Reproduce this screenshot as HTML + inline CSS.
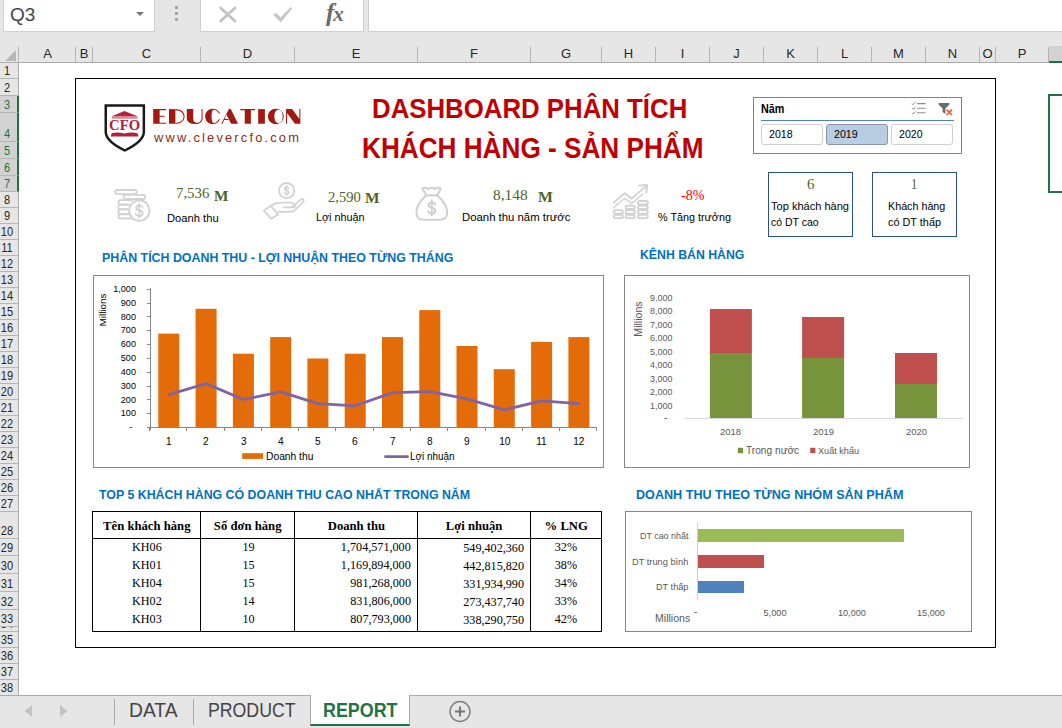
<!DOCTYPE html>
<html>
<head>
<meta charset="utf-8">
<title>Dashboard</title>
<style>
*{box-sizing:border-box;margin:0;padding:0}
html,body{width:1062px;height:728px;overflow:hidden;background:#fff}
body{font-family:"Liberation Sans",sans-serif;position:relative;color:#000}
.abs{position:absolute}
.t{position:absolute;white-space:nowrap;line-height:1;transform-origin:0 50%}
.serif{font-family:"Liberation Serif",serif}
#fbar{left:0;top:0;width:1062px;height:44px;background:#e6e6e6}
#namebox{left:3px;top:-1px;width:152px;height:33px;background:#fff;border:1px solid #d0d0d0}
#fxbox{left:200px;top:-1px;width:164px;height:33px;background:#fff;border:1px solid #d0d0d0}
#finput{left:368px;top:-1px;width:700px;height:33px;background:#fff;border:1px solid #d0d0d0}
#colhdr{left:0;top:32px;width:1062px;height:31px;background:#e6e6e6;border-bottom:1px solid #ababab}
.ch{position:absolute;top:45px;height:17px;font-size:13px;line-height:17px;text-align:center;color:#262626;padding-left:1px}
.cs{position:absolute;top:47px;width:1px;height:16px;background:#b5b5b5}
#rowhdr{left:0;top:63px;width:19px;height:633px;background:#e6e6e6;border-right:1px solid #ababab}
.rh{position:absolute;left:0;width:18px;font-size:13.5px;color:#262626;border-bottom:1px solid #b5b5b5;overflow:hidden}
.rh span{position:absolute;left:-8px;width:30px;bottom:0px;line-height:15px;text-align:center;transform:scaleX(.82)}
.rh.sel{background:#d2d2d2;color:#217346;width:19px;border-right:2px solid #217346}
#tabbar{left:0;top:695px;width:1062px;height:33px;background:#e6e6e6;border-top:1px solid #ababab}
.box{position:absolute;background:#fff}
</style>
</head>
<body>
<div class="abs" id="fbar"></div>
<div class="abs" id="namebox"></div>
<div class="abs" id="fxbox"></div>
<div class="abs" id="finput"></div>
<div class="t" style="left:10px;top:5px;font-size:19px;color:#444">Q3</div>
<svg class="abs" style="left:134px;top:10px" width="12" height="8"><path d="M2 2 L10 2 L6 6 Z" fill="#777"/></svg>
<div class="abs" style="left:175px;top:6px;width:3px;height:3px;background:#a6a6a6;box-shadow:0 6px 0 #a6a6a6,0 12px 0 #a6a6a6"></div>
<svg class="abs" style="left:216px;top:4px" width="24" height="22"><path d="M4.6 4 L19 17 M19 4 L4.6 17" stroke="#c2c2c2" stroke-width="2.8" stroke-linecap="round" fill="none"/></svg>
<svg class="abs" style="left:270px;top:4px" width="26" height="22"><path d="M3.4 10.4 L6.2 9 L10.6 13.6 L20.8 3 L22.2 4.4 L10.6 18.6 Z" fill="#c6c6c6"/></svg>
<div class="t serif" style="left:326px;top:0px;font-size:25px;font-style:italic;font-weight:bold;color:#6a6a6a;letter-spacing:-1px">f<span style="font-size:21px">x</span></div>
<div class="abs" id="colhdr"></div>
<div class="ch" style="left:19px;width:56px">A</div><div class="cs" style="left:75px"></div>
<div class="ch" style="left:75px;width:17px">B</div><div class="cs" style="left:92px"></div>
<div class="ch" style="left:92px;width:108px">C</div><div class="cs" style="left:200px"></div>
<div class="ch" style="left:200px;width:94px">D</div><div class="cs" style="left:294px"></div>
<div class="ch" style="left:294px;width:123px">E</div><div class="cs" style="left:417px"></div>
<div class="ch" style="left:417px;width:113px">F</div><div class="cs" style="left:530px"></div>
<div class="ch" style="left:530px;width:71px">G</div><div class="cs" style="left:601px"></div>
<div class="ch" style="left:601px;width:54px">H</div><div class="cs" style="left:655px"></div>
<div class="ch" style="left:655px;width:54px">I</div><div class="cs" style="left:709px"></div>
<div class="ch" style="left:709px;width:54px">J</div><div class="cs" style="left:763px"></div>
<div class="ch" style="left:763px;width:54px">K</div><div class="cs" style="left:817px"></div>
<div class="ch" style="left:817px;width:54px">L</div><div class="cs" style="left:871px"></div>
<div class="ch" style="left:871px;width:54px">M</div><div class="cs" style="left:925px"></div>
<div class="ch" style="left:925px;width:54px">N</div><div class="cs" style="left:979px"></div>
<div class="ch" style="left:979px;width:16px">O</div><div class="cs" style="left:995px"></div>
<div class="ch" style="left:995px;width:53px">P</div><div class="cs" style="left:1048px"></div>
<div class="abs" style="left:1049px;top:46px;width:13px;height:17px;background:#d2d2d2;border-bottom:2px solid #217346"></div>
<div class="cs" style="left:18px"></div>
<svg class="abs" style="left:4px;top:50px" width="13" height="12"><path d="M12 0 L12 11 L1 11 Z" fill="#b7b7b7"/></svg>
<div class="abs" id="rowhdr"></div>
<div class="rh" style="top:63px;height:16px"><span>1</span></div>
<div class="rh" style="top:79px;height:17px"><span>2</span></div>
<div class="rh sel" style="top:96px;height:17px"><span>3</span></div>
<div class="rh sel" style="top:113px;height:29px"><span>4</span></div>
<div class="rh sel" style="top:142px;height:17px"><span>5</span></div>
<div class="rh sel" style="top:159px;height:17px"><span>6</span></div>
<div class="rh sel" style="top:176px;height:16px"><span>7</span></div>
<div class="rh" style="top:192px;height:16px"><span>8</span></div>
<div class="rh" style="top:208px;height:16px"><span>9</span></div>
<div class="rh" style="top:224px;height:16px"><span>10</span></div>
<div class="rh" style="top:240px;height:16px"><span>11</span></div>
<div class="rh" style="top:256px;height:16px"><span>12</span></div>
<div class="rh" style="top:272px;height:16px"><span>13</span></div>
<div class="rh" style="top:288px;height:16px"><span>14</span></div>
<div class="rh" style="top:304px;height:16px"><span>15</span></div>
<div class="rh" style="top:320px;height:16px"><span>16</span></div>
<div class="rh" style="top:336px;height:16px"><span>17</span></div>
<div class="rh" style="top:352px;height:16px"><span>18</span></div>
<div class="rh" style="top:368px;height:16px"><span>19</span></div>
<div class="rh" style="top:384px;height:16px"><span>20</span></div>
<div class="rh" style="top:400px;height:16px"><span>21</span></div>
<div class="rh" style="top:416px;height:16px"><span>22</span></div>
<div class="rh" style="top:432px;height:16px"><span>23</span></div>
<div class="rh" style="top:448px;height:16px"><span>24</span></div>
<div class="rh" style="top:464px;height:16px"><span>25</span></div>
<div class="rh" style="top:480px;height:16px"><span>26</span></div>
<div class="rh" style="top:496px;height:16px"><span>27</span></div>
<div class="rh" style="top:512px;height:27px"><span>28</span></div>
<div class="rh" style="top:539px;height:17px"><span>29</span></div>
<div class="rh" style="top:556px;height:18px"><span>30</span></div>
<div class="rh" style="top:574px;height:18px"><span>31</span></div>
<div class="rh" style="top:592px;height:18px"><span>32</span></div>
<div class="rh" style="top:610px;height:17px"><span>33</span></div>
<div class="rh" style="top:627px;height:5px"><span>34</span></div>
<div class="rh" style="top:632px;height:16px"><span>35</span></div>
<div class="rh" style="top:648px;height:16px"><span>36</span></div>
<div class="rh" style="top:664px;height:16px"><span>37</span></div>
<div class="rh" style="top:680px;height:16px"><span>38</span></div>
<div class="abs" style="left:1048px;top:94px;width:30px;height:99px;border:2px solid #217346;background:#fff"></div>
<div class="abs" style="left:75px;top:78px;width:921px;height:570px;border:1px solid #000;background:#fff"></div>
<svg class="abs" style="left:100px;top:100px" width="50" height="56" viewBox="0 0 50 56">
<path d="M5.75 5.5 H43.85 V32 C43.85 40 34 46 24.8 50.5 C15.6 46 5.75 40 5.75 32 Z" fill="#fff" stroke="#1a1a1a" stroke-width="2.5" stroke-linejoin="miter"/>
<path d="M11.2 16.4 L24.4 10.9 L38 16.4 Z" fill="#b5203a"/>
<rect x="11.8" y="16.9" width="25.6" height="1.8" fill="#b5203a" opacity=".55"/>
<path d="M10.5 36.5 L12 33 Q18 31.6 24.6 33.6 Q31 31.6 37.2 33 L38.7 36.5 Z" fill="#b5203a"/>
</svg>
<div class="t serif" style="top:117.84px;font-size:15px;color:#b5203a;font-weight:bold;left:108.90px;transform:scaleX(0.9819);">CFO</div>
<svg class="abs" style="left:150px;top:104px" width="160" height="26" viewBox="0 0 1096 178" fill="#a3190f">
<path d="M22 35 H110 V42 H66 V80 H100 V87 H66 V128 H110 V135 H22 Z"/>
<path d="M130 35 H174 V135 H130 Z"/><path d="M174 35 C216 35 237 60 237 85 C237 110 216 135 174 135 V128 C210 128 230 108 230 85 C230 62 210 42 174 42 Z"/>
<path d="M252 35 H296 V100 C296 120 306 129 318 129 C339 129 353 115 353 95 V35 H360 V95 C360 122 340 137 312 137 C275 137 252 122 252 95 Z"/>
<path d="M479 64 C471 46 453 33 432 33 C400 33 378 55 378 85 C378 115 400 137 432 137 C453 137 471 124 479 106 L473 103 C466 118 452 130 438 130 C426 130 422 110 422 85 C422 60 426 40 438 40 C452 40 466 52 473 67 Z"/>
<path d="M541 35 H553 L603 135 H555 L524 72 L511 102 H536 L539 109 H508 L496 135 H488 Z"/>
<path d="M618 35 H720 V42 H691 V135 H649 V42 H618 Z"/>
<rect x="741" y="35" width="46" height="100"/>
<path fill-rule="evenodd" d="M862 33 C892 33 916 56 916 85 C916 114 892 137 862 137 C832 137 808 114 808 85 C808 56 832 33 862 33 Z M880 40 C862 40 852 60 852 85 C852 110 862 130 880 130 C897 130 909 110 909 85 C909 60 897 40 880 40 Z"/>
<path d="M932 35 H974 L1023 102 V35 H1030 V135 H992 L939 62 V135 H932 Z"/>
</svg>
<div class="t" style="top:130.60px;font-size:13px;color:#8e2a22;letter-spacing:2.2px;left:153.60px;transform:scaleX(0.9894);">www.clevercfo.com</div>
<div class="t" style="top:95.00px;font-size:28px;color:#c00000;font-weight:bold;left:372.00px;transform:scaleX(0.9213);">DASHBOARD PHÂN TÍCH</div>
<div class="t" style="top:133.99px;font-size:28.6px;color:#c00000;font-weight:bold;left:362.20px;transform:scaleX(0.9148);">KHÁCH HÀNG - SẢN PHẨM</div>
<svg class="abs" style="left:0;top:0" width="1062" height="240" viewBox="0 0 1062 240" fill="none" stroke="#d2d2d2" stroke-width="1.8" stroke-linecap="round" stroke-linejoin="round">
<!-- coin stack -->
<rect x="115.2" y="190" width="21.4" height="4.2" rx="2.1"/>
<rect x="123.6" y="194.8" width="21.6" height="4.2" rx="2.1"/>
<path d="M132 200.2 H120.6 a2.1 2.1 0 0 0 0 4.2 H128.6"/>
<path d="M128.4 204.9 H120.4 a2.1 2.1 0 0 0 0 4.2 H127.6"/>
<path d="M127.6 209.6 H120.4 a2.1 2.1 0 0 0 0 4.2 H128.4"/>
<path d="M128.6 214.3 H120.6 a2.1 2.1 0 0 0 0 4.2 H132.6"/>
<circle cx="139.3" cy="210.6" r="10.2"/>
<path d="M142.6 207.4 q-.9 -2 -3.3 -2 q-3.1 0 -3.1 2.5 q0 2 3.1 2.6 q3.4 .6 3.4 2.9 q0 2.6 -3.4 2.6 q-2.8 0 -3.6 -2.2 M139.3 203.6 V217.8" stroke-width="1.7"/>
<!-- hand + coin -->
<circle cx="286.6" cy="190.6" r="7.6"/>
<path d="M288.8 188.4 q-.6 -1.3 -2.2 -1.3 q-2.1 0 -2.1 1.7 q0 1.3 2.1 1.7 q2.3 .4 2.3 1.9 q0 1.7 -2.3 1.7 q-1.8 0 -2.4 -1.4 M286.6 185.8 V195.4" stroke-width="1.4"/>
<path d="M263.9 210.6 L270.9 205.8 L278 214.4 L271.3 218.8 Z"/>
<path d="M270.9 205.8 Q275 203 279.5 202.6 H290 Q295 203.2 295 205.4 Q295 207.4 291.6 207.4 H284"/>
<path d="M292 207.4 L300.8 199.4 Q303 198 303.6 200 Q304 201.4 302.6 202.6 L294.2 210.6 Q293 211.6 291 211.6 L278.5 211.9"/>
<!-- money bag -->
<g transform="translate(412.8,184.8)" stroke-width="2.1">
<path d="M13.5 10.6 L9.6 3.6 Q13 2.4 16 4.2 Q19 2 22 4.2 Q25 2.4 28 3.6 L24.4 10.6 Z"/>
<path d="M13.5 10.6 Q3.6 19 3.6 28 Q3.6 35 11 35 H27 Q34.4 35 34.4 28 Q34.4 19 24.4 10.6"/>
<path d="M22.4 19.6 q-1 -1.8 -3.4 -1.8 q-3.2 0 -3.2 2.6 q0 2 3.2 2.6 q3.4 .6 3.4 3 q0 2.6 -3.4 2.6 q-2.8 0 -3.6 -2.2 M19 15.6 V30.8" stroke-width="2"/>
</g>
<!-- growth chart -->
<g transform="translate(610,182.2) scale(1.05,1)">
<path d="M3.5 20.5 L14 11 L20.6 16.4 L33.6 4.6 M27.6 3.4 L35.4 2.8 L34.6 10.6"/>
<path d="M3.5 25.4 L14 16 L20.6 21.4 L31 12" stroke-width="1.4"/>
<rect x="3.6" y="28" width="8.6" height="3.4" rx="1.7"/><rect x="3.6" y="32.6" width="8.6" height="3.4" rx="1.7"/>
<rect x="15" y="23.4" width="8.6" height="3.4" rx="1.7"/><rect x="15" y="28" width="8.6" height="3.4" rx="1.7"/><rect x="15" y="32.6" width="8.6" height="3.4" rx="1.7"/>
<rect x="26.6" y="18.8" width="9.4" height="3.4" rx="1.7"/><rect x="26.6" y="23.4" width="9.4" height="3.4" rx="1.7"/><rect x="26.6" y="28" width="9.4" height="3.4" rx="1.7"/><rect x="26.6" y="32.6" width="9.4" height="3.4" rx="1.7"/>
</g>
</svg>
<div class="t serif" style="top:187.03px;font-size:13.7px;color:#4f6228;left:176.30px;transform:scaleX(1.0813);">7,536</div>
<div class="t serif" style="top:188.72px;font-size:14.3px;color:#4f6228;font-weight:bold;left:214.40px;transform:scaleX(1.0667);">M</div>
<div class="t" style="top:212.59px;font-size:11px;color:#000;left:167.20px;transform:scaleX(1.0164);">Doanh thu</div>
<div class="t serif" style="top:190.63px;font-size:13.7px;color:#4f6228;left:328.20px;transform:scaleX(1.0650);">2,590</div>
<div class="t serif" style="top:190.62px;font-size:14.3px;color:#4f6228;font-weight:bold;left:365.30px;transform:scaleX(1.0741);">M</div>
<div class="t" style="top:211.59px;font-size:11px;color:#000;left:316.40px;transform:scaleX(0.9834);">Lợi nhuận</div>
<div class="t serif" style="top:189.13px;font-size:13.7px;color:#4f6228;left:493.30px;transform:scaleX(1.1235);">8,148</div>
<div class="t serif" style="top:190.12px;font-size:14.3px;color:#4f6228;font-weight:bold;left:538.40px;transform:scaleX(1.1037);">M</div>
<div class="t" style="top:212.49px;font-size:11px;color:#000;left:462.00px;transform:scaleX(1.0316);">Doanh thu năm trước</div>
<div class="t serif" style="top:188.73px;font-size:13.7px;color:#ff0000;left:680.60px;transform:scaleX(1.0301);">-8%</div>
<div class="t" style="top:211.69px;font-size:11px;color:#000;left:657.70px;transform:scaleX(0.9810);">% Tăng trưởng</div>
<div class="abs" style="left:753px;top:97px;width:209px;height:57px;border:1px solid #5b8ac6;background:#fff"></div>
<div class="t" style="top:103.44px;font-size:12px;color:#000;font-weight:bold;left:761.20px;transform:scaleX(0.8995);">Năm</div>
<div class="abs" style="left:761px;top:119.5px;width:193px;height:1px;background:#4f81bd"></div>
<svg class="abs" style="left:911px;top:101px" width="16" height="15" viewBox="0 0 16 15" fill="none" stroke="#8c8c8c" stroke-width="1.1">
<path d="M6 2.6 H14.6 M6 7.2 H14.6 M6 11.8 H14.6"/>
<path d="M1 2.6 L2.2 3.8 L4.4 1.2 M1 7.2 L2.2 8.4 L4.4 5.8 M1 11.8 L2.2 13 L4.4 10.4" stroke-width="1"/>
</svg>
<svg class="abs" style="left:937px;top:101px" width="17" height="16" viewBox="0 0 17 16">
<path d="M1.6 2 H12.4 V3.6 L8.4 7.6 V13 L5.6 11 V7.6 L1.6 3.6 Z" fill="#6a6a6a"/>
<path d="M9.6 8.6 L15 14 M15 8.6 L9.6 14" stroke="#e4573f" stroke-width="1.6" fill="none"/>
</svg>
<div class="abs" style="left:761px;top:124px;width:62px;height:21px;border:1px solid #cfcfcf;border-radius:3px;background:#fff"></div>
<div class="t" style="top:129.21px;font-size:11.8px;color:#000;left:769.40px;transform:scaleX(0.8990);">2018</div>
<div class="abs" style="left:826px;top:124px;width:62px;height:21px;border:1px solid #8a96a8;border-radius:3px;background:#b8cce4"></div>
<div class="t" style="top:129.21px;font-size:11.8px;color:#000;left:834.40px;transform:scaleX(0.8990);">2019</div>
<div class="abs" style="left:891px;top:124px;width:62px;height:21px;border:1px solid #cfcfcf;border-radius:3px;background:#fff"></div>
<div class="t" style="top:129.21px;font-size:11.8px;color:#000;left:899.40px;transform:scaleX(0.8990);">2020</div>
<div class="abs" style="left:768px;top:172px;width:85px;height:65px;border:1px solid #2a518c;background:#fff"></div>
<div class="abs" style="left:872px;top:172px;width:85px;height:65px;border:1px solid #2a518c;background:#fff"></div>
<div class="t serif" style="top:176.74px;font-size:15px;color:#4f6228;left:807.00px;transform:scaleX(0.9867);">6</div>
<div class="t" style="top:201.29px;font-size:11px;color:#000;left:771.20px;transform:scaleX(1.0042);">Top khách hàng</div>
<div class="t" style="top:216.69px;font-size:11px;color:#000;left:771.20px;transform:scaleX(0.9532);">có DT cao</div>
<div class="t serif" style="top:176.74px;font-size:15px;color:#4f6228;left:911.40px;transform:scaleX(0.8267);">1</div>
<div class="t" style="top:201.29px;font-size:11px;color:#000;left:887.70px;transform:scaleX(0.9758);">Khách hàng</div>
<div class="t" style="top:216.69px;font-size:11px;color:#000;left:887.70px;transform:scaleX(0.9886);">có DT thấp</div>
<div class="t" style="top:251.06px;font-size:13.4px;color:#0070c0;font-weight:bold;left:102.40px;transform:scaleX(0.9255);">PHÂN TÍCH DOANH THU - LỢI NHUẬN THEO TỪNG THÁNG</div>
<div class="t" style="top:248.26px;font-size:13.4px;color:#0070c0;font-weight:bold;left:639.70px;transform:scaleX(0.9163);">KÊNH BÁN HÀNG</div>
<div class="t" style="top:488.26px;font-size:13.4px;color:#0070c0;font-weight:bold;left:99.30px;transform:scaleX(0.9232);">TOP 5 KHÁCH HÀNG CÓ DOANH THU CAO NHẤT TRONG NĂM</div>
<div class="t" style="top:488.26px;font-size:13.4px;color:#0070c0;font-weight:bold;left:636.40px;transform:scaleX(0.9411);">DOANH THU THEO TỪNG NHÓM SẢN PHẨM</div>
<div class="abs" style="left:93px;top:275px;width:511px;height:193px;border:1px solid #868686;background:#fff"></div>
<svg class="abs" style="left:0;top:0" width="1062" height="728" viewBox="0 0 1062 728">
<rect x="158.3" y="333.6" width="21" height="93.4" fill="#e36c09"/>
<rect x="195.6" y="308.8" width="21" height="118.2" fill="#e36c09"/>
<rect x="232.9" y="353.7" width="21" height="73.3" fill="#e36c09"/>
<rect x="270.2" y="337.1" width="21" height="89.9" fill="#e36c09"/>
<rect x="307.4" y="358.5" width="21" height="68.5" fill="#e36c09"/>
<rect x="344.7" y="353.7" width="21" height="73.3" fill="#e36c09"/>
<rect x="382.0" y="337.1" width="21" height="89.9" fill="#e36c09"/>
<rect x="419.3" y="310.1" width="21" height="116.9" fill="#e36c09"/>
<rect x="456.5" y="346.0" width="21" height="81.0" fill="#e36c09"/>
<rect x="493.8" y="369.2" width="21" height="57.8" fill="#e36c09"/>
<rect x="531.1" y="341.9" width="21" height="85.1" fill="#e36c09"/>
<rect x="568.4" y="337.1" width="21" height="89.9" fill="#e36c09"/>
<path d="M150.5 288 V430.0" stroke="#868686" stroke-width="1" fill="none"/>
<path d="M147 427.5 H597" stroke="#868686" stroke-width="1" fill="none"/>
<path d="M147 427.5 H150" stroke="#868686" stroke-width="1"/>
<path d="M147 413.5 H150" stroke="#868686" stroke-width="1"/>
<path d="M147 399.5 H150" stroke="#868686" stroke-width="1"/>
<path d="M147 386.5 H150" stroke="#868686" stroke-width="1"/>
<path d="M147 372.5 H150" stroke="#868686" stroke-width="1"/>
<path d="M147 358.5 H150" stroke="#868686" stroke-width="1"/>
<path d="M147 344.5 H150" stroke="#868686" stroke-width="1"/>
<path d="M147 330.5 H150" stroke="#868686" stroke-width="1"/>
<path d="M147 316.5 H150" stroke="#868686" stroke-width="1"/>
<path d="M147 303.5 H150" stroke="#868686" stroke-width="1"/>
<path d="M147 289.5 H150" stroke="#868686" stroke-width="1"/>
<path d="M149.5 427.0 V431.0" stroke="#868686" stroke-width="1"/>
<path d="M186.5 427.0 V431.0" stroke="#868686" stroke-width="1"/>
<path d="M224.5 427.0 V431.0" stroke="#868686" stroke-width="1"/>
<path d="M261.5 427.0 V431.0" stroke="#868686" stroke-width="1"/>
<path d="M298.5 427.0 V431.0" stroke="#868686" stroke-width="1"/>
<path d="M335.5 427.0 V431.0" stroke="#868686" stroke-width="1"/>
<path d="M373.5 427.0 V431.0" stroke="#868686" stroke-width="1"/>
<path d="M410.5 427.0 V431.0" stroke="#868686" stroke-width="1"/>
<path d="M447.5 427.0 V431.0" stroke="#868686" stroke-width="1"/>
<path d="M485.5 427.0 V431.0" stroke="#868686" stroke-width="1"/>
<path d="M522.5 427.0 V431.0" stroke="#868686" stroke-width="1"/>
<path d="M559.5 427.0 V431.0" stroke="#868686" stroke-width="1"/>
<path d="M596.5 427.0 V431.0" stroke="#868686" stroke-width="1"/>
<polyline points="168.8,394.7 206.1,383.6 243.4,399.5 280.7,391.9 317.9,403.7 355.2,405.8 392.5,392.6 429.8,391.7 467.0,398.9 504.3,409.9 541.6,400.9 578.9,403.7" fill="none" stroke="#8064a2" stroke-width="2.8" stroke-linejoin="round" stroke-linecap="round"/>
<rect x="242.2" y="453.2" width="20.8" height="5.7" fill="#e36c09"/>
<path d="M385.4 456.6 H407.6" stroke="#8064a2" stroke-width="2.8" stroke-linecap="round"/>
</svg>
<div class="t" style="top:422.27px;font-size:9.6px;color:#000;left:129.40px;transform-origin:100% 50%;transform:scaleX(0.95);">-</div>
<div class="t" style="top:408.44px;font-size:9.6px;color:#000;left:120.38px;transform-origin:100% 50%;transform:scaleX(0.95);">100</div>
<div class="t" style="top:394.61px;font-size:9.6px;color:#000;left:120.38px;transform-origin:100% 50%;transform:scaleX(0.95);">200</div>
<div class="t" style="top:380.78px;font-size:9.6px;color:#000;left:120.38px;transform-origin:100% 50%;transform:scaleX(0.95);">300</div>
<div class="t" style="top:366.95px;font-size:9.6px;color:#000;left:120.38px;transform-origin:100% 50%;transform:scaleX(0.95);">400</div>
<div class="t" style="top:353.12px;font-size:9.6px;color:#000;left:120.38px;transform-origin:100% 50%;transform:scaleX(0.95);">500</div>
<div class="t" style="top:339.29px;font-size:9.6px;color:#000;left:120.38px;transform-origin:100% 50%;transform:scaleX(0.95);">600</div>
<div class="t" style="top:325.46px;font-size:9.6px;color:#000;left:120.38px;transform-origin:100% 50%;transform:scaleX(0.95);">700</div>
<div class="t" style="top:311.63px;font-size:9.6px;color:#000;left:120.38px;transform-origin:100% 50%;transform:scaleX(0.95);">800</div>
<div class="t" style="top:297.80px;font-size:9.6px;color:#000;left:120.38px;transform-origin:100% 50%;transform:scaleX(0.95);">900</div>
<div class="t" style="top:283.97px;font-size:9.6px;color:#000;left:112.38px;transform-origin:100% 50%;transform:scaleX(0.95);">1,000</div>
<div class="t" style="top:437.30px;font-size:10.4px;color:#000;left:165.95px;transform-origin:50% 50%;transform:scaleX(0.97);">1</div>
<div class="t" style="top:437.30px;font-size:10.4px;color:#000;left:203.22px;transform-origin:50% 50%;transform:scaleX(0.97);">2</div>
<div class="t" style="top:437.30px;font-size:10.4px;color:#000;left:240.50px;transform-origin:50% 50%;transform:scaleX(0.97);">3</div>
<div class="t" style="top:437.30px;font-size:10.4px;color:#000;left:277.77px;transform-origin:50% 50%;transform:scaleX(0.97);">4</div>
<div class="t" style="top:437.30px;font-size:10.4px;color:#000;left:315.05px;transform-origin:50% 50%;transform:scaleX(0.97);">5</div>
<div class="t" style="top:437.30px;font-size:10.4px;color:#000;left:352.32px;transform-origin:50% 50%;transform:scaleX(0.97);">6</div>
<div class="t" style="top:437.30px;font-size:10.4px;color:#000;left:389.60px;transform-origin:50% 50%;transform:scaleX(0.97);">7</div>
<div class="t" style="top:437.30px;font-size:10.4px;color:#000;left:426.87px;transform-origin:50% 50%;transform:scaleX(0.97);">8</div>
<div class="t" style="top:437.30px;font-size:10.4px;color:#000;left:464.15px;transform-origin:50% 50%;transform:scaleX(0.97);">9</div>
<div class="t" style="top:437.30px;font-size:10.4px;color:#000;left:498.53px;transform-origin:50% 50%;transform:scaleX(0.97);">10</div>
<div class="t" style="top:437.30px;font-size:10.4px;color:#000;left:536.19px;transform-origin:50% 50%;transform:scaleX(0.97);">11</div>
<div class="t" style="top:437.30px;font-size:10.4px;color:#000;left:573.08px;transform-origin:50% 50%;transform:scaleX(0.97);">12</div>
<div class="t" style="top:451.84px;font-size:10px;color:#000;left:265.60px;transform:scaleX(1.0269);">Doanh thu</div>
<div class="t" style="top:451.84px;font-size:10px;color:#000;left:409.80px;transform:scaleX(0.9880);">Lợi nhuận</div>
<div class="t" style="left:103.4px;top:309.6px;font-size:9.8px;transform-origin:50% 50%;transform:translate(-50%,-50%) rotate(-90deg)">Millions</div>
<div class="abs" style="left:624px;top:275px;width:346px;height:193px;border:1px solid #868686;background:#fff"></div>
<svg class="abs" style="left:0;top:0" width="1062" height="728" viewBox="0 0 1062 728">
<rect x="709.9" y="353" width="42" height="65" fill="#77933c"/>
<rect x="709.9" y="309" width="42" height="44" fill="#c0504d"/>
<rect x="802.1" y="358" width="42" height="60" fill="#77933c"/>
<rect x="802.1" y="317" width="42" height="41" fill="#c0504d"/>
<rect x="895" y="384" width="42" height="34" fill="#77933c"/>
<rect x="895" y="353" width="42" height="31" fill="#c0504d"/>
<path d="M684.5 418.5 H962.6" stroke="#d9d9d9" stroke-width="1"/>
<rect x="737.8" y="447.8" width="5.2" height="5.4" fill="#77933c"/>
<rect x="810.2" y="447.8" width="5.2" height="5.4" fill="#c0504d"/>
</svg>
<div class="t" style="top:413.04px;font-size:10px;color:#595959;left:664.00px;">-</div>
<div class="t" style="top:401.78px;font-size:9px;color:#595959;left:650.40px;transform:scaleX(0.9942);">1,000</div>
<div class="t" style="top:388.28px;font-size:9px;color:#595959;left:650.40px;transform:scaleX(0.9942);">2,000</div>
<div class="t" style="top:374.78px;font-size:9px;color:#595959;left:650.40px;transform:scaleX(0.9942);">3,000</div>
<div class="t" style="top:361.28px;font-size:9px;color:#595959;left:650.40px;transform:scaleX(0.9942);">4,000</div>
<div class="t" style="top:347.78px;font-size:9px;color:#595959;left:650.40px;transform:scaleX(0.9942);">5,000</div>
<div class="t" style="top:334.28px;font-size:9px;color:#595959;left:650.40px;transform:scaleX(0.9942);">6,000</div>
<div class="t" style="top:320.78px;font-size:9px;color:#595959;left:650.40px;transform:scaleX(0.9942);">7,000</div>
<div class="t" style="top:307.28px;font-size:9px;color:#595959;left:650.40px;transform:scaleX(0.9942);">8,000</div>
<div class="t" style="top:293.78px;font-size:9px;color:#595959;left:650.40px;transform:scaleX(0.9942);">9,000</div>
<div class="t" style="top:427.71px;font-size:9.2px;color:#595959;left:720.40px;transform:scaleX(1.0267);">2018</div>
<div class="t" style="top:427.71px;font-size:9.2px;color:#595959;left:812.60px;transform:scaleX(1.0267);">2019</div>
<div class="t" style="top:427.71px;font-size:9.2px;color:#595959;left:905.50px;transform:scaleX(1.0267);">2020</div>
<div class="t" style="top:445.54px;font-size:10px;color:#595959;left:745.90px;transform:scaleX(1.0164);">Trong nước</div>
<div class="t" style="top:445.70px;font-size:9.8px;color:#595959;left:817.50px;transform:scaleX(0.9314);">Xuất khẩu</div>
<div class="t" style="left:638px;top:318.5px;font-size:10.6px;color:#595959;transform-origin:50% 50%;transform:translate(-50%,-50%) rotate(-90deg)">Millions</div>
<div class="abs" style="left:92px;top:511px;width:510px;height:121px;border:1px solid #000;background:#fff"></div>
<div class="abs" style="left:92px;top:538px;width:510px;height:1px;background:#000"></div>
<div class="abs" style="left:200px;top:511px;width:1px;height:121px;background:#000"></div>
<div class="abs" style="left:294px;top:511px;width:1px;height:121px;background:#000"></div>
<div class="abs" style="left:417px;top:511px;width:1px;height:121px;background:#000"></div>
<div class="abs" style="left:530px;top:511px;width:1px;height:121px;background:#000"></div>
<div class="t serif" style="top:519.11px;font-size:13px;color:#000;font-weight:bold;left:101.70px;transform-origin:50% 50%;transform:scaleX(0.975);">Tên khách hàng</div>
<div class="t serif" style="top:519.11px;font-size:13px;color:#000;font-weight:bold;left:212.82px;transform-origin:50% 50%;transform:scaleX(0.975);">Số đơn hàng</div>
<div class="t serif" style="top:519.11px;font-size:13px;color:#000;font-weight:bold;left:326.55px;transform-origin:50% 50%;transform:scaleX(0.975);">Doanh thu</div>
<div class="t serif" style="top:519.11px;font-size:13px;color:#000;font-weight:bold;left:444.92px;transform-origin:50% 50%;transform:scaleX(0.975);">Lợi nhuận</div>
<div class="t serif" style="top:519.11px;font-size:13px;color:#000;font-weight:bold;left:543.79px;transform-origin:50% 50%;transform:scaleX(0.975);">% LNG</div>
<div class="t serif" style="top:539.71px;font-size:13px;color:#000;left:130.61px;transform-origin:50% 50%;transform:scaleX(0.935);">KH06</div>
<div class="t serif" style="top:539.71px;font-size:13px;color:#000;left:242.25px;transform-origin:50% 50%;transform:scaleX(0.935);">19</div>
<div class="t serif" style="top:539.71px;font-size:13px;color:#000;left:336.25px;transform-origin:100% 50%;transform:scaleX(0.935);">1,704,571,000</div>
<div class="t serif" style="top:541.21px;font-size:13px;color:#000;left:458.80px;transform-origin:100% 50%;transform:scaleX(0.935);">549,402,360</div>
<div class="t serif" style="top:539.71px;font-size:13px;color:#000;left:554.08px;transform-origin:50% 50%;transform:scaleX(0.935);">32%</div>
<div class="t serif" style="top:557.76px;font-size:13px;color:#000;left:130.61px;transform-origin:50% 50%;transform:scaleX(0.935);">KH01</div>
<div class="t serif" style="top:557.76px;font-size:13px;color:#000;left:242.25px;transform-origin:50% 50%;transform:scaleX(0.935);">15</div>
<div class="t serif" style="top:557.76px;font-size:13px;color:#000;left:336.25px;transform-origin:100% 50%;transform:scaleX(0.935);">1,169,894,000</div>
<div class="t serif" style="top:559.26px;font-size:13px;color:#000;left:458.80px;transform-origin:100% 50%;transform:scaleX(0.935);">442,815,820</div>
<div class="t serif" style="top:557.76px;font-size:13px;color:#000;left:554.08px;transform-origin:50% 50%;transform:scaleX(0.935);">38%</div>
<div class="t serif" style="top:575.81px;font-size:13px;color:#000;left:130.61px;transform-origin:50% 50%;transform:scaleX(0.935);">KH04</div>
<div class="t serif" style="top:575.81px;font-size:13px;color:#000;left:242.25px;transform-origin:50% 50%;transform:scaleX(0.935);">15</div>
<div class="t serif" style="top:575.81px;font-size:13px;color:#000;left:346.00px;transform-origin:100% 50%;transform:scaleX(0.935);">981,268,000</div>
<div class="t serif" style="top:577.31px;font-size:13px;color:#000;left:458.80px;transform-origin:100% 50%;transform:scaleX(0.935);">331,934,990</div>
<div class="t serif" style="top:575.81px;font-size:13px;color:#000;left:554.08px;transform-origin:50% 50%;transform:scaleX(0.935);">34%</div>
<div class="t serif" style="top:593.86px;font-size:13px;color:#000;left:130.61px;transform-origin:50% 50%;transform:scaleX(0.935);">KH02</div>
<div class="t serif" style="top:593.86px;font-size:13px;color:#000;left:242.25px;transform-origin:50% 50%;transform:scaleX(0.935);">14</div>
<div class="t serif" style="top:593.86px;font-size:13px;color:#000;left:346.00px;transform-origin:100% 50%;transform:scaleX(0.935);">831,806,000</div>
<div class="t serif" style="top:595.36px;font-size:13px;color:#000;left:458.80px;transform-origin:100% 50%;transform:scaleX(0.935);">273,437,740</div>
<div class="t serif" style="top:593.86px;font-size:13px;color:#000;left:554.08px;transform-origin:50% 50%;transform:scaleX(0.935);">33%</div>
<div class="t serif" style="top:611.91px;font-size:13px;color:#000;left:130.61px;transform-origin:50% 50%;transform:scaleX(0.935);">KH03</div>
<div class="t serif" style="top:611.91px;font-size:13px;color:#000;left:242.25px;transform-origin:50% 50%;transform:scaleX(0.935);">10</div>
<div class="t serif" style="top:611.91px;font-size:13px;color:#000;left:346.00px;transform-origin:100% 50%;transform:scaleX(0.935);">807,793,000</div>
<div class="t serif" style="top:613.41px;font-size:13px;color:#000;left:458.80px;transform-origin:100% 50%;transform:scaleX(0.935);">338,290,750</div>
<div class="t serif" style="top:611.91px;font-size:13px;color:#000;left:554.08px;transform-origin:50% 50%;transform:scaleX(0.935);">42%</div>
<div class="abs" style="left:625px;top:511px;width:347px;height:121px;border:1px solid #868686;background:#fff"></div>
<div class="abs" style="left:697px;top:523px;width:1px;height:77px;background:#d0d0d0"></div>
<div class="abs" style="left:698px;top:529px;width:206px;height:13px;background:#9bbb59"></div>
<div class="abs" style="left:698px;top:555px;width:66px;height:13px;background:#c0504d"></div>
<div class="abs" style="left:698px;top:581px;width:46px;height:12px;background:#4f81bd"></div>
<div class="t" style="top:530.70px;font-size:9.8px;color:#595959;left:640.00px;transform:scaleX(0.9097);">DT cao nhất</div>
<div class="t" style="top:556.70px;font-size:9.8px;color:#595959;left:632.00px;transform:scaleX(0.9442);">DT trung bình</div>
<div class="t" style="top:582.30px;font-size:9.8px;color:#595959;left:656.00px;transform:scaleX(0.9345);">DT thấp</div>
<div class="t" style="top:606.93px;font-size:10px;color:#595959;left:694.00px;">-</div>
<div class="t" style="top:608.81px;font-size:9.2px;color:#595959;left:763.50px;transform:scaleX(1.0000);">5,000</div>
<div class="t" style="top:608.81px;font-size:9.2px;color:#595959;left:838.40px;transform:scaleX(0.9890);">10,000</div>
<div class="t" style="top:608.81px;font-size:9.2px;color:#595959;left:916.60px;transform:scaleX(0.9890);">15,000</div>
<div class="t" style="top:612.95px;font-size:11.4px;color:#595959;left:654.80px;transform:scaleX(0.9267);">Millions</div>
<div class="abs" id="tabbar"></div>
<svg class="abs" style="left:20px;top:703px" width="54" height="17"><path d="M12 2 V14 L4.6 8 Z" fill="#c3c3c3"/><path d="M40 2 V14 L47.4 8 Z" fill="#c3c3c3"/></svg>
<div class="abs" style="left:114px;top:699px;width:1px;height:26px;background:#ababab"></div>
<div class="abs" style="left:193px;top:699px;width:1px;height:26px;background:#ababab"></div>
<div class="abs" style="left:310px;top:695px;width:100px;height:31px;background:#fff;border-bottom:2px solid #217346;border-right:1px solid #ababab;border-left:1px solid #ababab"></div>
<svg class="abs" style="left:447px;top:699px" width="26" height="26"><circle cx="13" cy="12.5" r="10" fill="none" stroke="#808080" stroke-width="1.5"/><path d="M13 7.5 V17.5 M8 12.5 H18" stroke="#777" stroke-width="2"/></svg>
<div class="t" style="top:701.08px;font-size:19.4px;color:#444;left:129.00px;transform:scaleX(0.9930);">DATA</div>
<div class="t" style="top:701.08px;font-size:19.4px;color:#444;left:207.50px;transform:scaleX(0.9126);">PRODUCT</div>
<div class="t" style="top:701.08px;font-size:19.4px;color:#217346;font-weight:bold;left:323.00px;transform:scaleX(0.9219);">REPORT</div>
</body>
</html>
